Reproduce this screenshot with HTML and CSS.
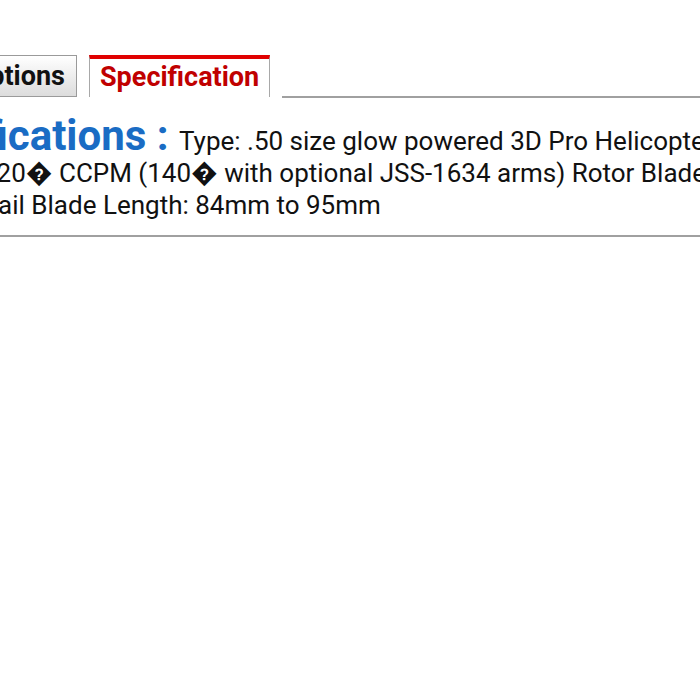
FILE: index.html
```html
<!DOCTYPE html>
<html>
<head>
<meta charset="utf-8">
<link rel="stylesheet" href="styles.css">
</head>
<body>
<div class="page">
  <div class="tabs">
    <div class="tab tab-off">Options</div>
    <div class="tab tab-on">Specification</div>
    <div class="tab-rest"></div>
  </div>
  <div class="panel">
    <div class="line line1"><span class="heading">Specifications : </span>Type: .50 size glow powered 3D Pro Helicopter</div>
    <div class="line line2">120� CCPM (140� with optional JSS-1634 arms) Rotor Blade Length</div>
    <div class="line line3">Tail Blade Length: 84mm to 95mm</div>
  </div>
</div>
</body>
</html>
```
FILE: styles.css
```css
html, body {
  margin: 0;
  padding: 0;
  background: #fff;
  overflow: hidden;
}
.page {
  margin-left: -41px;
  width: 1000px;
  padding-top: 55px;
  font-family: Roboto, "Noto Sans", sans-serif;
  color: #111;
}
.tabs {
  display: flex;
  align-items: flex-end;
  gap: 12px;
  height: 42px;
}
.tab {
  font-size: 27px;
  font-weight: bold;
  line-height: 30px;
  box-sizing: border-box;
  white-space: nowrap;
}
.tab-off {
  width: 118px;
  height: 42px;
  padding: 5px 11px 0 0;
  text-align: right;
  overflow: hidden;
  border: 1px solid #9a9a9a;
  background: linear-gradient(#ffffff, #dcdcdc);
  color: #111;
}
.tab-on {
  height: 42px;
  padding: 3px 10px 0 10px;
  border: 1px solid #a8a8a8;
  border-top: 4px solid #e00000;
  border-bottom: none;
  background: #fff;
  color: #c00000;
}
.tab-rest {
  flex: 1;
  border-bottom: 2px solid #a0a0a0;
  margin-bottom: -1px;
}
.panel {
  border-bottom: 2px solid #a0a0a0;
  padding: 23px 0 14px;
  white-space: nowrap;
}
.line {
  font-size: 26px;
  line-height: 32px;
}
.heading {
  font-size: 42px;
  font-weight: bold;
  color: #1a6cc4;
}
.line1 { margin-left: -82px; }
.line2 { padding-left: 23px; }
.line3 { padding-left: 25px; }
```
